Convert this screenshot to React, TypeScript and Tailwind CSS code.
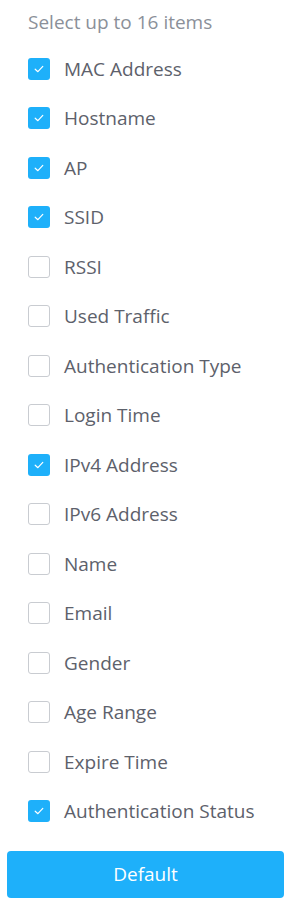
import React from "react";

const items: [string, boolean][] = [
  ["MAC Address", true],
  ["Hostname", true],
  ["AP", true],
  ["SSID", true],
  ["RSSI", false],
  ["Used Traffic", false],
  ["Authentication Type", false],
  ["Login Time", false],
  ["IPv4 Address", true],
  ["IPv6 Address", false],
  ["Name", false],
  ["Email", false],
  ["Gender", false],
  ["Age Range", false],
  ["Expire Time", false],
  ["Authentication Status", true],
];

export default function App() {
  return (
    <div className="w-[291px] h-[902px] bg-white flex flex-col" style={{ fontFamily: '"Open Sans", sans-serif' }}>
      <div className="h-[44px] flex items-center px-[28px] text-[19px] text-[#8b9099]">Select up to 16 items</div>
      <div className="flex flex-col">
        {items.map(([label, checked]) => (
          <div key={label} className="h-[49.5px] flex items-center px-[28px]">
            {checked ? (
              <div className="w-[22px] h-[22px] rounded-[3px] bg-[#1eb0fa] flex items-center justify-center">
                <svg width="12" height="12" viewBox="0 0 12 12" fill="none">
                  <path d="M2.2 6.2 L4.9 8.7 L9.8 3.4" stroke="white" strokeWidth="1.2" strokeLinecap="round" strokeLinejoin="round" />
                </svg>
              </div>
            ) : (
              <div className="w-[22px] h-[22px] rounded-[3px] border border-[#c9ccd1] bg-white" />
            )}
            <span className="ml-[14px] text-[19px] text-[#5d616b]">{label}</span>
          </div>
        ))}
      </div>
      <div className="px-[7px] mt-[15px]">
        <button className="w-full h-[47px] rounded-[4px] bg-[#1eb0fa] text-white text-[19px]">Default</button>
      </div>
    </div>
  );
}
